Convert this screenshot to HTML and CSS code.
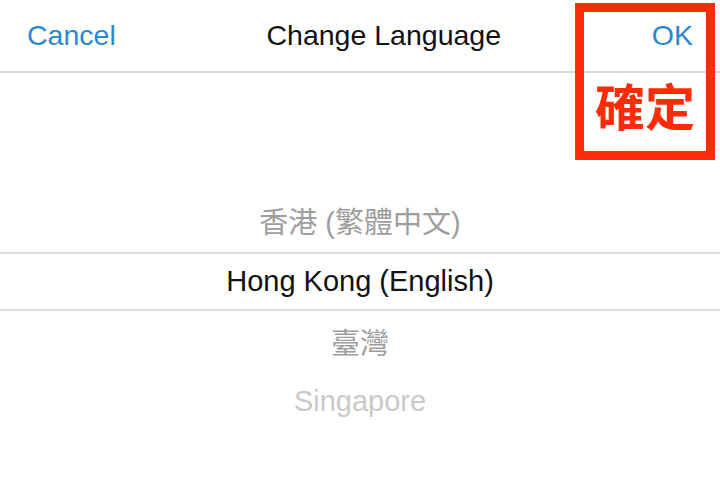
FILE: index.html
```html
<!DOCTYPE html>
<html lang="zh-Hant">
<head>
    <meta charset="UTF-8">
    <meta name="viewport" content="width=device-width, initial-scale=1.0">
    <title>Change Language</title>
    <link rel="stylesheet" href="styles.css">
</head>
<body>
    <div class="nav-bar">
        <span class="nav-btn">Cancel</span>
        <span class="nav-title">Change Language</span>
        <span class="nav-btn">OK</span>
    </div>

    <!--Selector de idioma-->
    <div class="picker">
        <div class="picker-row near first">香港 (繁體中文)</div>
        <div class="picker-row selected">Hong Kong (English)</div>
        <div class="picker-row near">臺灣</div>
        <div class="picker-row far">Singapore</div>
    </div>

    <!--Anotación sobre el botón OK-->
    <div class="note-box">確定</div>
</body>
</html>
```
FILE: styles.css
```css
body {
    font-family: "Liberation Sans", "Noto Sans CJK TC", sans-serif;
    background-color: #ffffff;
    color: #000000;
    margin: 0;
    padding: 0;
    height: 100vh;
    overflow: hidden;
}
.nav-bar {
    display: flex;
    align-items: center;
    height: 71px;
    padding: 0 27px 0 27px;
    border-bottom: 2px solid #d9d9d9;
    font-size: 28.5px;
}
.nav-btn {
    color: #2a88d2;
}
.nav-title {
    flex: 1;
    text-align: center;
    color: #111111;
}
.picker {
    padding-top: 120px;
}
.picker-row {
    height: 59px;
    display: flex;
    align-items: center;
    justify-content: center;
    font-size: 29px;
    color: #9e9e9e;
}
.picker-row.first {
    padding-bottom: 5px;
    height: 54px;
}
.picker-row.selected {
    color: #111111;
    border-top: 2px solid #dddddd;
    border-bottom: 2px solid #dddddd;
    height: 55px;
}
.picker-row.far {
    color: #c9c9c9;
    padding-top: 3px;
    height: 56px;
}
.note-box {
    position: absolute;
    left: 575px;
    top: 3px;
    width: 140px;
    height: 157px;
    box-sizing: border-box;
    border: 9px solid #fd2c08;
    display: flex;
    align-items: center;
    justify-content: center;
    padding-top: 44px;
    color: #fd2c08;
    font-family: "Noto Sans CJK TC", sans-serif;
    font-weight: bold;
    font-size: 50px;
    line-height: 1;
}
```
